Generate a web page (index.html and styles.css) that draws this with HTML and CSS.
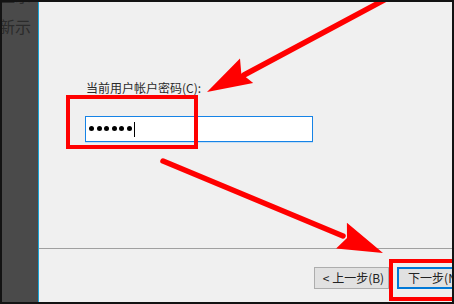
FILE: index.html
```html
<!DOCTYPE html>
<html lang="zh-CN">
<head>
<meta charset="utf-8">
<title>密码</title>
<link rel="stylesheet" href="styles.css">
</head>
<body>
<div class="screen">
  <aside class="side">
    <div class="side-text">
      <span class="side-line">显示</span>
      <span class="side-line">新示</span>
    </div>
  </aside>
  <main class="panel">
    <section class="form">
      <label class="label">当前用户帐户密码(C):</label>
      <div class="input">
        <span class="dot"></span><span class="dot"></span><span class="dot"></span><span class="dot"></span><span class="dot"></span><span class="dot"></span><span class="caret"></span>
      </div>
    </section>
    <div class="sep"></div>
    <footer class="buttons">
      <button class="btn">&lt; 上一步(B)</button>
      <button class="btn primary">下一步(N)</button>
    </footer>
  </main>
  <svg class="annot" viewBox="2 2 450 300" width="450" height="300">
    <rect x="68" y="97" width="128" height="50" fill="none" stroke="#ff0000" stroke-width="4"/>
    <rect x="391" y="261" width="80" height="38" fill="none" stroke="#ff0000" stroke-width="4"/>
    <line x1="386" y1="-1" x2="244" y2="75" stroke="#ff0000" stroke-width="5.5" stroke-linecap="round"/>
    <polygon points="207,92 253.2,83.1 241.3,73.6 240,58.5" fill="#ff0000"/>
    <line x1="163" y1="161" x2="343" y2="236" stroke="#ff0000" stroke-width="5.5" stroke-linecap="round"/>
    <polygon points="383,253 346.9,222.7 347,237.9 336.1,248.5" fill="#ff0000"/>
  </svg>
</div>
</body>
</html>
```
FILE: styles.css
```css
html, body {
  margin: 0;
  padding: 0;
}

body {
  background: #131313;
  width: 454px;
  height: 304px;
  overflow: hidden;
  font-family: "Noto Sans CJK SC", "Noto Sans", sans-serif;
}

.screen {
  position: relative;
  box-sizing: border-box;
  width: 454px;
  height: 304px;
  padding: 2px;
  display: flex;
}

.side {
  width: 36px;
  flex: none;
  background: #4a4a4a;
  border-right: 1px solid #1aa3d6;
  overflow: hidden;
}

.side-text {
  display: flex;
  flex-direction: column;
  margin-top: -22px;
  margin-left: -3px;
  font-size: 16px;
  line-height: 31px;
  color: #2b2b2b;
  white-space: nowrap;
}

.panel {
  flex: 1;
  display: flex;
  flex-direction: column;
  background: #f0f0f0;
  overflow: hidden;
}

.form {
  padding: 78px 0 0 46px;
}

.label {
  display: block;
  margin-left: 1px;
  font-size: 12px;
  line-height: 16px;
  color: #2a2a2a;
}

.input {
  margin-top: 20px;
  box-sizing: border-box;
  width: 228px;
  height: 26px;
  border: 1px solid #1683e6;
  box-shadow: 0 1px 0 #c4def5;
  background: #ffffff;
  display: flex;
  align-items: center;
  gap: 2.6px;
  padding: 0 0 0 3px;
}

.dot {
  width: 5px;
  height: 5px;
  border-radius: 50%;
  background: #000000;
  margin-top: -2px;
}

.caret {
  width: 1px;
  height: 15px;
  background: #000000;
  margin-left: -0.5px;
}

.sep {
  margin-top: auto;
  height: 1px;
  background: #a0a0a0;
}

.buttons {
  height: 53px;
  box-sizing: border-box;
  display: flex;
  gap: 8px;
  padding: 18px 0 0 275px;
}

.btn {
  flex: none;
  box-sizing: border-box;
  width: 75px;
  height: 22px;
  margin: 0;
  padding: 0 0 0 4px;
  font-family: inherit;
  font-size: 12px;
  line-height: 16px;
  color: #222222;
  background: #e1e1e1;
  border: 1px solid #adadad;
}

.btn.primary {
  padding: 0;
  border-color: #0078d7;
  box-shadow: inset 0 0 0 1px #0078d7;
}

.annot {
  position: absolute;
  left: 2px;
  top: 2px;
  pointer-events: none;
}
```
